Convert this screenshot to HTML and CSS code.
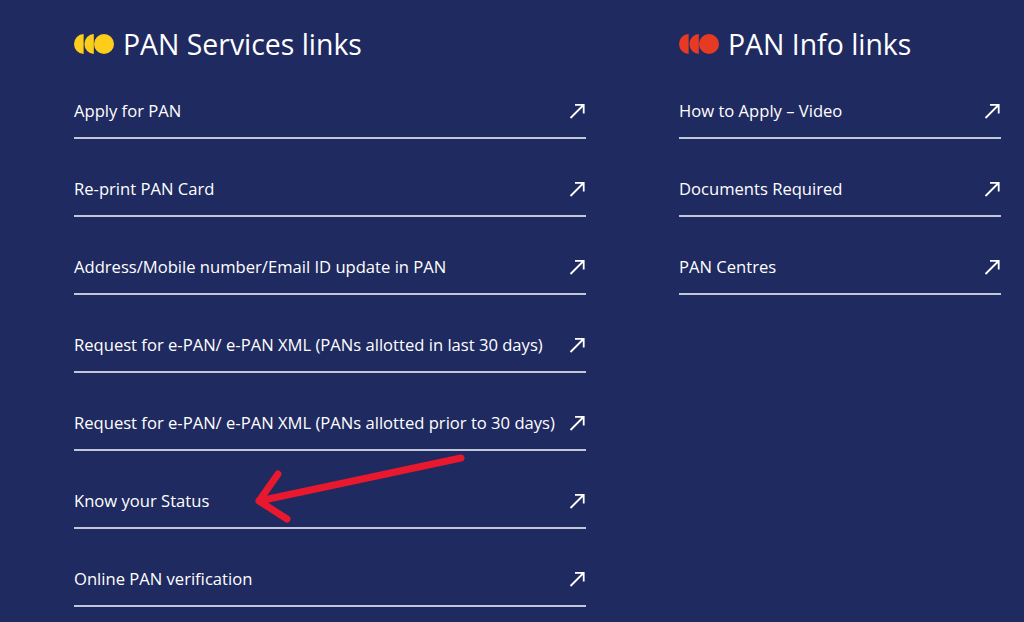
FILE: index.html
```html
<!DOCTYPE html>
<html lang="en">
<head>
    <meta charset="UTF-8">
    <meta name="viewport" content="width=device-width, initial-scale=1.0">
    <title>PAN links</title>
    <link rel="stylesheet" href="styles.css">
</head>
<body>
    <div class="container">
        <!-- PAN services -->
        <section class="links links-services">
            <h2 class="links-title">
                <svg class="dots dots-yellow" viewBox="0 0 40 20"><path d="M9.600 0A9.600 10 0 0 0 9.600 20Z"/><path d="M19.800 0A9.400 10 0 0 0 19.800 20Z"/><circle cx="30" cy="10" r="10"/></svg>
                PAN Services links
            </h2>
            <a class="link-row" href="#"><span>Apply for PAN</span><svg class="go" viewBox="0 0 16 16"><path d="M1.500 15 14.500 2M6 1.800h8.700v8.700"/></svg></a>
            <a class="link-row" href="#"><span>Re-print PAN Card</span><svg class="go" viewBox="0 0 16 16"><path d="M1.500 15 14.500 2M6 1.800h8.700v8.700"/></svg></a>
            <a class="link-row" href="#"><span>Address/Mobile number/Email ID update in PAN</span><svg class="go" viewBox="0 0 16 16"><path d="M1.500 15 14.500 2M6 1.800h8.700v8.700"/></svg></a>
            <a class="link-row" href="#"><span>Request for e-PAN/ e-PAN XML (PANs allotted in last 30 days)</span><svg class="go" viewBox="0 0 16 16"><path d="M1.500 15 14.500 2M6 1.800h8.700v8.700"/></svg></a>
            <a class="link-row" href="#"><span>Request for e-PAN/ e-PAN XML (PANs allotted prior to 30 days)</span><svg class="go" viewBox="0 0 16 16"><path d="M1.500 15 14.500 2M6 1.800h8.700v8.700"/></svg></a>
            <a class="link-row" href="#"><span>Know your Status</span><svg class="go" viewBox="0 0 16 16"><path d="M1.500 15 14.500 2M6 1.800h8.700v8.700"/></svg></a>
            <a class="link-row" href="#"><span>Online PAN verification</span><svg class="go" viewBox="0 0 16 16"><path d="M1.500 15 14.500 2M6 1.800h8.700v8.700"/></svg></a>
        </section>

        <!-- PAN info -->
        <section class="links links-info">
            <h2 class="links-title">
                <svg class="dots dots-red" viewBox="0 0 40 20"><path d="M9.600 0A9.600 10 0 0 0 9.600 20Z"/><path d="M19.800 0A9.400 10 0 0 0 19.800 20Z"/><circle cx="30" cy="10" r="10"/></svg>
                PAN Info links
            </h2>
            <a class="link-row" href="#"><span>How to Apply – Video</span><svg class="go" viewBox="0 0 16 16"><path d="M1.500 15 14.500 2M6 1.800h8.700v8.700"/></svg></a>
            <a class="link-row" href="#"><span>Documents Required</span><svg class="go" viewBox="0 0 16 16"><path d="M1.500 15 14.500 2M6 1.800h8.700v8.700"/></svg></a>
            <a class="link-row" href="#"><span>PAN Centres</span><svg class="go" viewBox="0 0 16 16"><path d="M1.500 15 14.500 2M6 1.800h8.700v8.700"/></svg></a>
        </section>
    </div>

    <!-- Red annotation arrow drawn over the page -->
    <svg class="annotation" viewBox="0 0 1024 622"><path d="M461 458 259 501M278 474 259 501 287 519"/></svg>
</body>
</html>
```

FILE: styles.css
```css
html, body {
    height: 100%;
}
body {
    font-family: "Open Sans", "Noto Sans", Arial, sans-serif;
    background-color: #1f2a60;
    color: #fff;
    margin: 0;
    overflow: hidden;
    position: relative;
}
.container {
    display: flex;
    gap: 93px;
    padding: 27px 23px 0 74px;
}
.links-services {
    width: 512px;
}
.links-info {
    width: 322px;
}
.links-title {
    display: flex;
    align-items: center;
    gap: 9px;
    height: 34px;
    margin: 0;
    font-size: 28.4px;
    font-weight: 400;
    line-height: 34px;
}
.dots {
    width: 40px;
    height: 20px;
    flex: none;
}
.dots-yellow {
    fill: #fdcd1c;
}
.dots-red {
    fill: #e63a25;
}
.link-row {
    display: flex;
    align-items: center;
    justify-content: space-between;
    box-sizing: border-box;
    height: 78px;
    padding-top: 23px;
    border-bottom: 2px solid #c4c6d8;
    color: #fff;
    font-size: 16.6px;
    text-decoration: none;
}
.go {
    width: 16px;
    height: 16px;
    margin-right: 1px;
    fill: none;
    stroke: #fff;
    stroke-width: 1.8;
}
.annotation {
    position: absolute;
    top: 0;
    left: 0;
    width: 1024px;
    height: 622px;
    fill: none;
    stroke: #e8182e;
    stroke-width: 7;
    stroke-linecap: round;
    stroke-linejoin: round;
}
```
